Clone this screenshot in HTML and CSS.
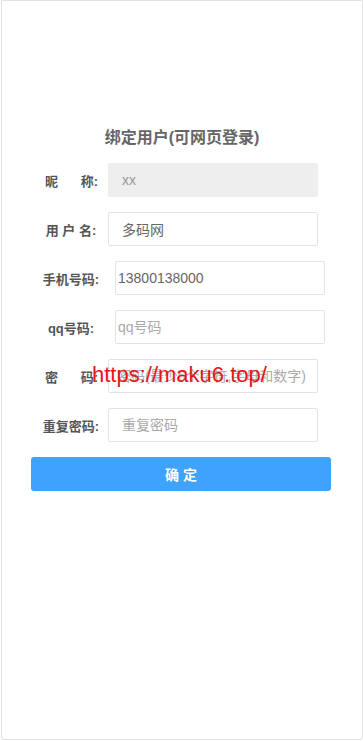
FILE: index.html
```html
<!DOCTYPE html>
<html lang="zh-CN">
<head>
    <meta charset="UTF-8">
    <meta name="viewport" content="width=device-width, initial-scale=1.0">
    <title>绑定用户</title>
    <link rel="stylesheet" href="styles.css">
</head>
<body>
    <div class="page">
        <h2 class="title">绑定用户(可网页登录)</h2>
        <form class="bind-form" onsubmit="return false">
            <div class="field">
                <label class="label spread"><span>昵</span><span>称:</span></label>
                <input class="input disabled" type="text" value="xx" readonly>
            </div>
            <div class="field">
                <label class="label">用 户 名:</label>
                <input class="input" type="text" value="多码网">
            </div>
            <div class="field plain">
                <label class="label">手机号码:</label>
                <input class="input" type="text" value="13800138000">
            </div>
            <div class="field plain">
                <label class="label">qq号码:</label>
                <input class="input" type="text" placeholder="qq号码">
            </div>
            <div class="field">
                <label class="label spread"><span>密</span><span>码:</span></label>
                <input class="input long" type="password" placeholder="密码(最少6个字符,字母和数字)">
            </div>
            <div class="field">
                <label class="label">重复密码:</label>
                <input class="input" type="password" placeholder="重复密码">
            </div>
            <button class="submit" type="submit">确 定</button>
        </form>
        <div class="watermark">https://maku6.top/</div>
    </div>
</body>
</html>
```

FILE: styles.css
```css
body {
    margin: 0;
    background-color: #fff;
    font-family: "Liberation Sans", Arial, "Noto Sans CJK SC", sans-serif;
}

.page {
    position: relative;
    box-sizing: border-box;
    width: 362px;
    height: 740px;
    margin-left: 1px;
    border: 1px solid #e2e2e2;
    border-radius: 0 0 3px 3px;
    padding-top: 125px;
}

.title {
    margin: 0 0 13px;
    font-size: 16px;
    line-height: 24px;
    font-weight: bold;
    color: #666;
    text-align: center;
}

.field {
    display: flex;
    align-items: center;
    padding-left: 39px;
    margin-bottom: 15px;
}

.label {
    box-sizing: border-box;
    width: 60px;
    font-size: 13px;
    font-weight: bold;
    color: #555;
    text-align: center;
    white-space: pre;
}

.label.spread {
    display: flex;
    justify-content: space-between;
    padding: 0 3px 0 4px;
}

.label,
.input,
.submit {
    font-family: "Liberation Sans", Arial, "Noto Sans CJK SC", sans-serif;
}

.input {
    box-sizing: border-box;
    width: 210px;
    height: 34px;
    margin-left: 7px;
    padding: 0 13px;
    border: 1px solid #e3e3e3;
    border-radius: 2px;
    font-size: 14px;
    color: #666;
    background-color: #fff;
    outline: none;
}

.input::placeholder {
    color: #aaa;
}

.input.disabled {
    background-color: #eee;
    border-color: #eee;
    color: #999;
}

.input.long {
    padding: 0 2px 0 8px;
}

.field.plain .input {
    margin-left: 14px;
    padding-left: 2px;
}

.submit {
    display: block;
    width: 300px;
    height: 34px;
    margin: 0 0 0 29px;
    border: none;
    border-radius: 3px;
    background-color: #3fa2fd;
    color: #fff;
    font-size: 14px;
    font-weight: bold;
    cursor: pointer;
}

.watermark {
    position: absolute;
    left: 90px;
    top: 361px;
    font-size: 22px;
    color: #e8141b;
    pointer-events: none;
}
```
